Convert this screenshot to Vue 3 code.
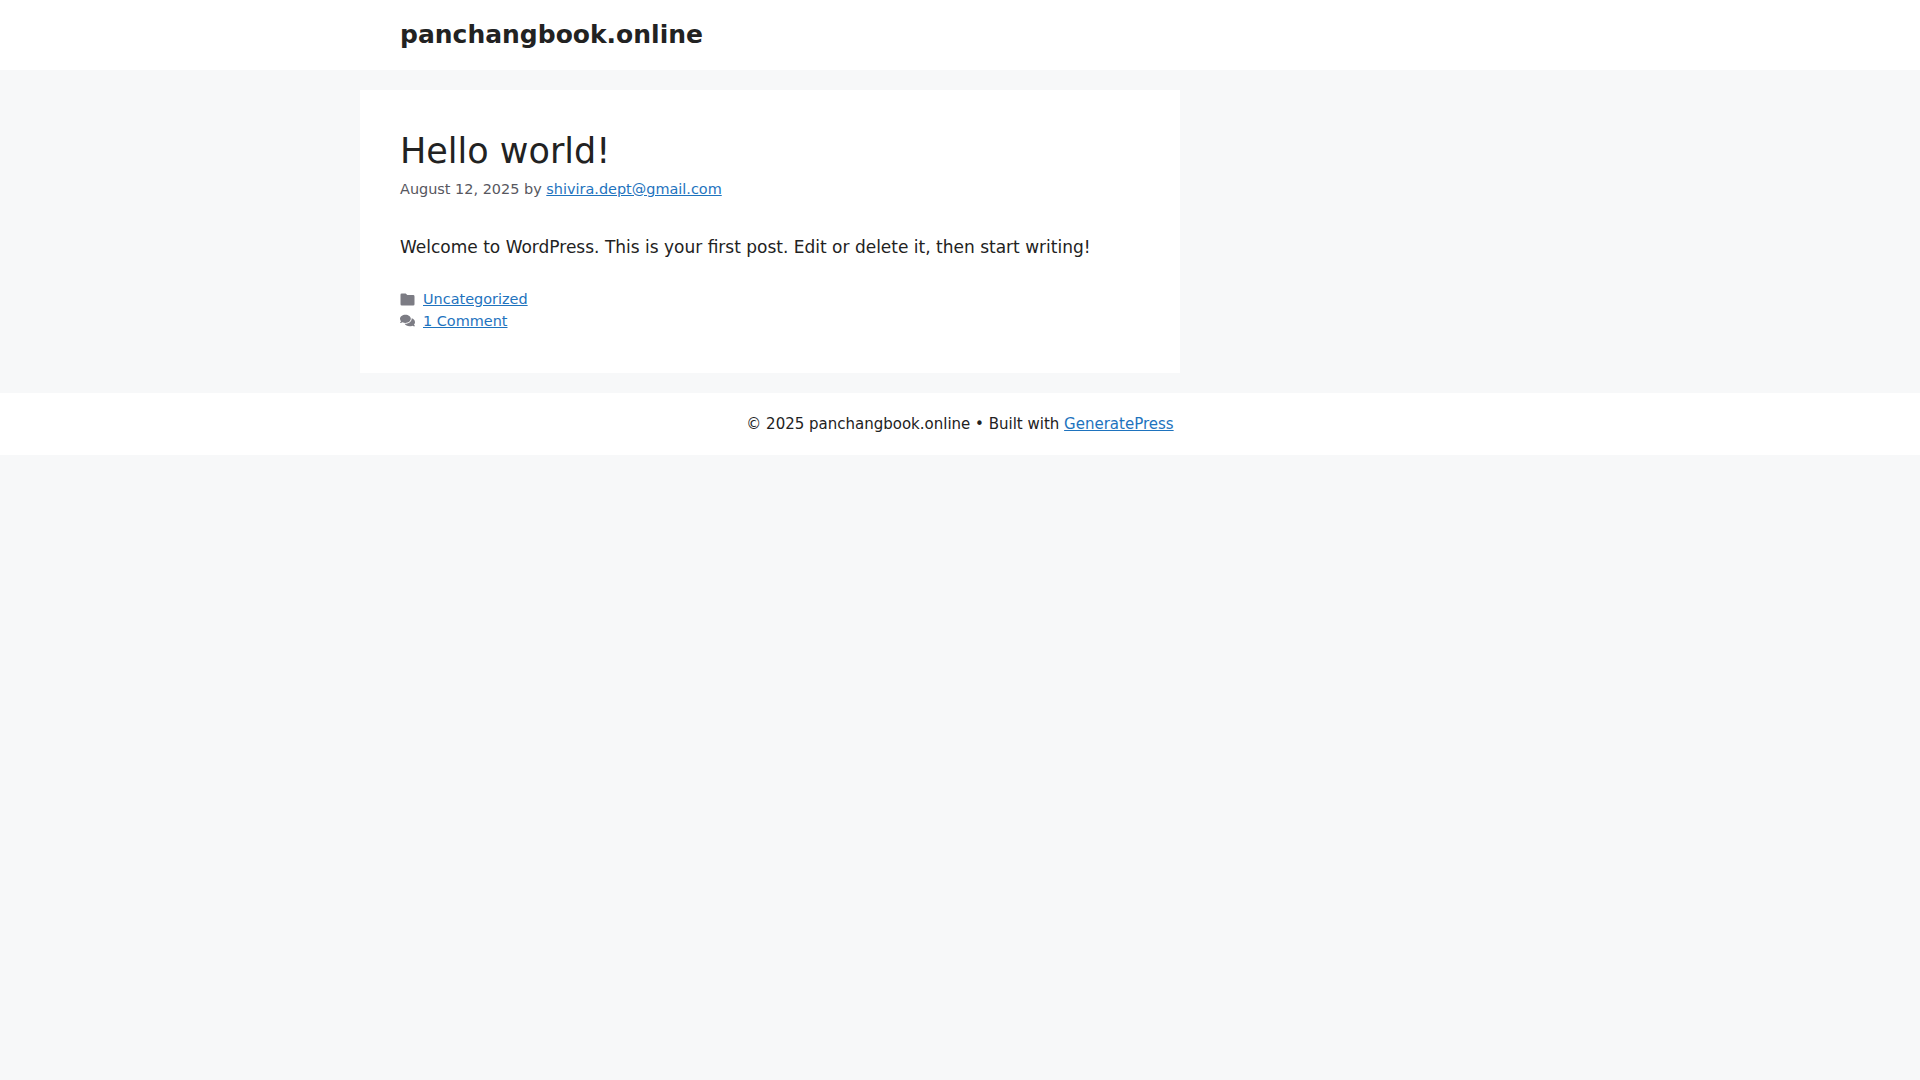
<script setup>
</script>

<template>
  <div class="page">
    <header class="site-header">
      <div class="inside-header">
        <p class="main-title"><a href="#">panchangbook.online</a></p>
      </div>
    </header>
    <div class="site-content">
      <article class="post">
        <h2 class="entry-title">Hello world!</h2>
        <div class="entry-meta">
          <span>August 12, 2025</span> by <a href="#">shivira.dept@gmail.com</a>
        </div>
        <div class="entry-summary">
          <p>Welcome to WordPress. This is your first post. Edit or delete it, then start writing!</p>
        </div>
        <footer class="entry-foot">
          <div class="foot-row">
            <svg class="icon" viewBox="0 0 15 15" aria-hidden="true"><path d="M1.800 1.500H5.700L7.300 3.100H13.200A1.300 1.300 0 0 1 14.500 4.400V12.200A1.300 1.300 0 0 1 13.200 13.500H1.800A1.300 1.300 0 0 1 .5 12.200V2.800A1.300 1.300 0 0 1 1.800 1.500Z"/></svg>
            <a href="#">Uncategorized</a>
          </div>
          <div class="foot-row">
            <svg class="icon" viewBox="0 0 576 512" aria-hidden="true"><path d="M416 192c0-88.400-93.100-160-208-160S0 103.600 0 192c0 34.300 14.100 65.900 38 92-13.400 30.200-35.500 54.200-35.800 54.500-2.200 2.300-2.800 5.700-1.500 8.700S4.800 352 8 352c36.600 0 66.900-12.300 88.700-25 32.200 15.700 70.300 25 111.300 25 114.900 0 208-71.600 208-160zm122 220c23.900-26 38-57.700 38-92 0-66.900-53.500-124.200-129.300-148.100.9 6.600 1.300 13.300 1.300 20.100 0 105.900-107.700 192-240 192-10.800 0-21.300-.8-31.700-1.900C207.800 439.600 281.800 480 368 480c41 0 79.100-9.200 111.300-25 21.800 12.700 52.100 25 88.700 25 3.200 0 6.100-1.900 7.300-4.800 1.300-2.900.7-6.300-1.500-8.700-.3-.3-22.400-24.200-35.800-54.500z"/></svg>
            <a href="#">1 Comment</a>
          </div>
        </footer>
      </article>
    </div>
    <footer class="site-info">
      <span>© 2025 panchangbook.online • Built with <a href="#">GeneratePress</a></span>
    </footer>
  </div>
</template>

<style>
html, body { margin: 0; background: #f7f8f9; }
</style>

<style scoped>
.page {
  min-height: 1080px;
  background: #f7f8f9;
  color: #222;
  font-family: "DejaVu Sans", sans-serif;
  font-size: 17px;
  line-height: 1.5;
}
a { color: #1e73be; }
.site-header { background: #fff; }
.inside-header {
  width: 1120px;
  margin: 0 auto;
  padding: 20px 0;
}
.main-title {
  margin: 0;
  font-size: 25px;
  font-weight: 700;
  line-height: 30px;
}
.main-title a { color: #222; text-decoration: none; }
.site-content {
  width: 1200px;
  margin: 0 auto;
  padding: 20px 0;
}
.post {
  width: 740px;
  background: #fff;
  padding: 40px;
}
.entry-title {
  margin: 0;
  font-size: 35px;
  font-weight: 400;
  line-height: 1.2;
  color: #222;
}
.entry-meta {
  font-size: 85%;
  color: #575760;
  margin-top: 0.5em;
  line-height: 1.5;
}
.entry-summary { margin-top: 2em; }
.entry-summary p { margin: 0; }
.entry-foot { margin-top: 2em; font-size: 85%; color: #575760; }
.foot-row { display: flex; align-items: center; gap: 8px; }
.icon { width: 15px; height: 15px; margin-bottom: 2px; fill: #7c7c84; flex: none; }
.site-info {
  background: #fff;
  text-align: center;
  font-size: 15px;
  line-height: 1.5;
  padding: 20px 0;
  color: #222;
}
</style>
